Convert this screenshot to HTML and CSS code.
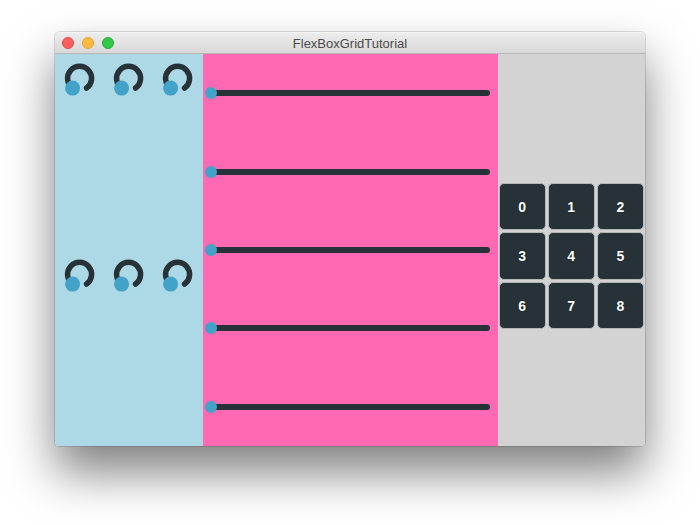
FILE: index.html
```html
<!DOCTYPE html>
<html>
<head>
<meta charset="utf-8">
<link rel="stylesheet" href="styles.css">
</head>
<body>
<div class="window">
  <div class="titlebar">
    <div class="lights">
      <span class="light red"></span>
      <span class="light yellow"></span>
      <span class="light green"></span>
    </div>
    <div class="title">FlexBoxGridTutorial</div>
  </div>
  <div class="content">
    <div class="col knobs">
      <div class="knob-row">
        <svg class="knob" viewBox="0 0 49 49"><path d="M17.5 34.1 A12 12 0 1 1 31.5 34.1" /><circle cx="17.5" cy="34.1" r="7.5"/></svg>
        <svg class="knob" viewBox="0 0 49 49"><path d="M17.5 34.1 A12 12 0 1 1 31.5 34.1" /><circle cx="17.5" cy="34.1" r="7.5"/></svg>
        <svg class="knob" viewBox="0 0 49 49"><path d="M17.5 34.1 A12 12 0 1 1 31.5 34.1" /><circle cx="17.5" cy="34.1" r="7.5"/></svg>
      </div>
      <div class="knob-row">
        <svg class="knob" viewBox="0 0 49 49"><path d="M17.5 34.1 A12 12 0 1 1 31.5 34.1" /><circle cx="17.5" cy="34.1" r="7.5"/></svg>
        <svg class="knob" viewBox="0 0 49 49"><path d="M17.5 34.1 A12 12 0 1 1 31.5 34.1" /><circle cx="17.5" cy="34.1" r="7.5"/></svg>
        <svg class="knob" viewBox="0 0 49 49"><path d="M17.5 34.1 A12 12 0 1 1 31.5 34.1" /><circle cx="17.5" cy="34.1" r="7.5"/></svg>
      </div>
    </div>
    <div class="col sliders">
      <div class="slider-row"><div class="track"><span class="thumb"></span></div></div>
      <div class="slider-row"><div class="track"><span class="thumb"></span></div></div>
      <div class="slider-row"><div class="track"><span class="thumb"></span></div></div>
      <div class="slider-row"><div class="track"><span class="thumb"></span></div></div>
      <div class="slider-row"><div class="track"><span class="thumb"></span></div></div>
    </div>
    <div class="col buttons">
      <div class="grid">
        <div class="btn">0</div>
        <div class="btn">1</div>
        <div class="btn">2</div>
        <div class="btn">3</div>
        <div class="btn">4</div>
        <div class="btn">5</div>
        <div class="btn">6</div>
        <div class="btn">7</div>
        <div class="btn">8</div>
      </div>
    </div>
  </div>
</div>
</body>
</html>
```
FILE: styles.css
```css
html, body {
  margin: 0;
  padding: 0;
  background: #ffffff;
}
body {
  width: 700px;
  height: 525px;
  overflow: hidden;
}
.window {
  margin: 32px 0 0 55px;
  width: 590px;
  height: 414px;
  border-radius: 5px 5px 4px 4px;
  overflow: hidden;
  display: flex;
  flex-direction: column;
  box-shadow: 0 26px 48px rgba(0, 0, 0, 0.5), 0 0 0 1px rgba(0, 0, 0, 0.13);
}
.titlebar {
  height: 20px;
  flex: none;
  display: flex;
  align-items: center;
  justify-content: center;
  position: relative;
  background: linear-gradient(#ececec, #d8d8d8);
  border-top: 1px solid #f5f5f5;
  border-bottom: 1px solid #b8b8b8;
}
.lights {
  position: absolute;
  left: 7px;
  top: 4px;
  display: flex;
  gap: 8px;
}
.light {
  width: 12px;
  height: 12px;
  border-radius: 50%;
  box-sizing: border-box;
}
.red { background: #fc605c; border: 1px solid #de4a44; }
.yellow { background: #fdbc40; border: 1px solid #dea234; }
.green { background: #34c84a; border: 1px solid #27aa35; }
.title {
  font-family: "Liberation Sans", Arial, sans-serif;
  font-size: 13px;
  color: #4b4b4b;
}
.content {
  flex: 1;
  display: flex;
}
.col {
  flex: 1 1 0;
}
.knobs {
  background: #add8e6;
  display: flex;
  flex-direction: column;
}
.knob-row {
  flex: 1 1 0;
  display: flex;
  align-items: flex-start;
}
.knob {
  flex: 1 1 0;
  width: 49px;
  height: 49px;
}
.knob path {
  fill: none;
  stroke: #263238;
  stroke-width: 5.5;
  stroke-linecap: round;
}
.knob circle {
  fill: #42a2c8;
}
.sliders {
  flex: 2 1 0;
  background: #ff69b4;
  display: flex;
  flex-direction: column;
}
.slider-row {
  flex: 1 1 0;
  display: flex;
  flex-direction: column;
  justify-content: center;
}
.track {
  position: relative;
  height: 6px;
  margin: 0 7.5px 0 5.5px;
  border-radius: 3px;
  background: #263238;
}
.thumb {
  position: absolute;
  left: -3px;
  top: -3px;
  width: 12px;
  height: 12px;
  border-radius: 50%;
  background: #42a2c8;
}
.buttons {
  background: #d3d3d3;
  display: flex;
  flex-direction: column;
  justify-content: center;
}
.grid {
  margin-top: 12px;
  display: grid;
  grid-template-columns: repeat(3, 1fr);
  grid-auto-rows: 49.5px;
}
.btn {
  margin: 1px;
  border-radius: 5px;
  background: #263238;
  border: 1px solid #b4b7b8;
  display: flex;
  align-items: center;
  justify-content: center;
  font-family: "Liberation Sans", Arial, sans-serif;
  font-weight: bold;
  font-size: 14px;
  color: #ffffff;
  text-shadow: 0 0 1px #000;
}
```
